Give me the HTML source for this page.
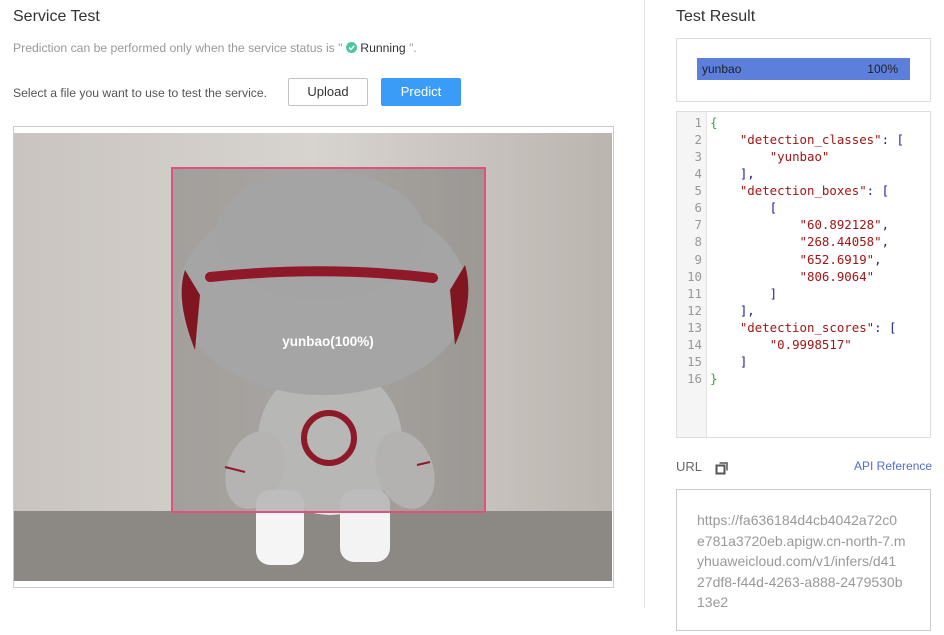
<!DOCTYPE html>
<html><head><meta charset="utf-8"><style>
*{margin:0;padding:0;box-sizing:border-box}
body{width:944px;height:635px;background:#fff;font-family:"Liberation Sans",sans-serif;position:relative;overflow:hidden;color:#252b3a}
.a{position:absolute}
.mono{font-family:"DejaVu Sans Mono","Liberation Mono",monospace;font-size:12.4px;line-height:17.07px}
</style></head><body>
<div class="a" style="left:13px;top:8px;font-size:16px;color:#333">Service Test</div>
<div class="a" style="left:13px;top:41px;font-size:12.2px;color:#999">Prediction can be performed only when the service status is " <span style="display:inline-block;width:11px;height:11px;border-radius:50%;background:#4cc6a0;vertical-align:-1px;position:relative"><svg width="11" height="11" style="position:absolute;left:0;top:0"><path d="M3 5.6L5 7.5L8.2 3.8" stroke="#fff" stroke-width="1.5" fill="none"/></svg></span> <span style="color:#333">Running</span> ".</div>
<div class="a" style="left:13px;top:86px;font-size:12.2px;color:#555">Select a file you want to use to test the service.</div>
<div class="a" style="left:288px;top:78px;width:80px;height:28px;border:1px solid #c2c2c2;border-radius:2px;font-size:13px;color:#333;text-align:center;line-height:26px">Upload</div>
<div class="a" style="left:381px;top:78px;width:80px;height:28px;background:#3b9cf8;border-radius:2px;font-size:13px;color:#fff;text-align:center;line-height:28px">Predict</div>
<div class="a" style="left:13px;top:126px;width:601px;height:462px;border:1px solid #ccc"></div>
<svg class="a" style="left:0;top:0" width="640" height="635">
<defs><linearGradient id="w" x1="0" x2="1"><stop offset="0" stop-color="#c9c4bf"/><stop offset=".5" stop-color="#d7d3ce"/><stop offset="1" stop-color="#bbb5b0"/></linearGradient></defs>
<rect x="14" y="133" width="598" height="378" fill="url(#w)"/>
<rect x="14" y="511" width="598" height="70" fill="#8c8985"/>
<ellipse cx="330" cy="440" rx="72" ry="75" fill="#ececeb"/>
<ellipse cx="255" cy="470" rx="28" ry="40" fill="#e9e8e7" transform="rotate(20 255 470)"/>
<ellipse cx="405" cy="470" rx="28" ry="40" fill="#e6e5e4" transform="rotate(-20 405 470)"/>
<rect x="256" y="490" width="48" height="75" rx="14" fill="#f5f5f5"/>
<rect x="340" y="490" width="50" height="72" rx="14" fill="#f3f3f3"/>
<ellipse cx="323" cy="295" rx="145" ry="100" fill="#d4d4d4"/>
<ellipse cx="320" cy="235" rx="105" ry="65" fill="#d2d2d2"/>
<path d="M210 277Q325 265 433 278" stroke="#b5142a" stroke-width="10" stroke-linecap="round" fill="none"/>
<path d="M185 270Q175 300 195 350L200 295Z" fill="#a0101e"/>
<path d="M465 265Q475 300 455 345L450 290Z" fill="#a0101e"/>
<circle cx="329" cy="438" r="25" fill="none" stroke="#b3142a" stroke-width="6"/>
<path d="M225 467L245 472M417 465L430 462" stroke="#b3142a" stroke-width="2"/>
<rect x="172" y="168" width="313" height="344" fill="rgba(40,40,40,0.27)" stroke="#e0527d" stroke-width="2"/>
<text x="328" y="346" font-family="Liberation Sans" font-size="13.5" font-weight="bold" fill="#fff" text-anchor="middle">yunbao(100%)</text>
</svg>
<div class="a" style="left:644px;top:0;width:1px;height:608px;background:#e5e5e5"></div>
<div class="a" style="left:676px;top:8px;font-size:16px;color:#333">Test Result</div>
<div class="a" style="left:676px;top:38px;width:255px;height:64px;border:1px solid #ddd"></div>
<div class="a" style="left:697px;top:58px;width:213px;height:22px;background:#5c7fdc;font-size:12px;color:#222;line-height:22px;padding:0 12px 0 5px"><span>yunbao</span><span style="float:right">100%</span></div>
<div class="a" style="left:676px;top:111px;width:255px;height:327px;border:1px solid #ddd"></div>
<div class="a mono" style="left:677px;top:112px;width:30px;height:325px;background:#f5f5f5;border-right:1px solid #e2e2e2;color:#999;text-align:right;padding:2px 4px 0 0">1<br>2<br>3<br>4<br>5<br>6<br>7<br>8<br>9<br>10<br>11<br>12<br>13<br>14<br>15<br>16</div>
<pre class="a mono" style="left:710px;top:114px;color:#1a1a9a"><span style="color:#3a3">{</span>
    <span style="color:#a31515">"detection_classes"</span>: [
        <span style="color:#a31515">"yunbao"</span>
    ],
    <span style="color:#a31515">"detection_boxes"</span>: [
        [
            <span style="color:#a31515">"60.892128"</span>,
            <span style="color:#a31515">"268.44058"</span>,
            <span style="color:#a31515">"652.6919"</span>,
            <span style="color:#a31515">"806.9064"</span>
        ]
    ],
    <span style="color:#a31515">"detection_scores"</span>: [
        <span style="color:#a31515">"0.9998517"</span>
    ]
<span style="color:#3a3">}</span></pre>
<div class="a" style="left:676px;top:459px;font-size:13px;color:#666">URL</div>
<svg class="a" style="left:715px;top:461px" width="14" height="14"><rect x="1.5" y="4.5" width="8" height="8" fill="none" stroke="#555" stroke-width="2"/><path d="M4.5 2H12V9.5" fill="none" stroke="#555" stroke-width="1.5"/></svg>
<div class="a" style="left:854px;top:459px;font-size:12px;color:#526ecc">API Reference</div>
<div class="a" style="left:676px;top:489px;width:255px;height:142px;border:1px solid #ccc;padding:20px 0 0 20px;font-size:14px;line-height:20.5px;color:#999;white-space:nowrap">https://fa636184d4cb4042a72c0<br>e781a3720eb.apigw.cn-north-7.m<br>yhuaweicloud.com/v1/infers/d41<br>27df8-f44d-4263-a888-2479530b<br>13e2</div>
</body></html>
